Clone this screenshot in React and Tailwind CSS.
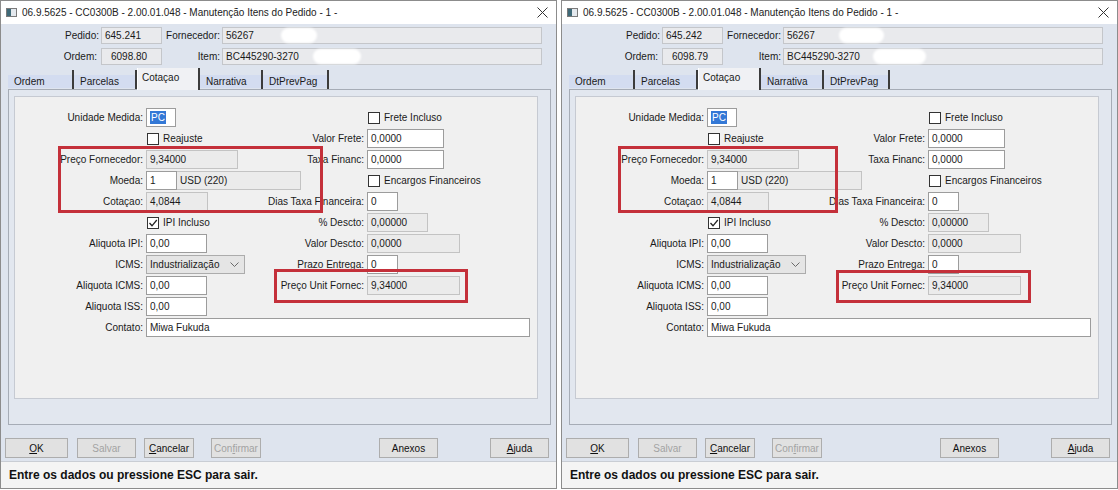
import React from 'react'

const FONT = "font-['Liberation_Sans',Arial,sans-serif]"

function Field({ ro, className = '', children }) {
  return (
    <div
      className={`flex h-[19px] items-center overflow-hidden whitespace-nowrap border pl-[3px] ${
        ro ? 'border-[#c3c3c3] bg-[#ebebeb]' : 'border-[#9c9c9c] bg-white'
      } ${className}`}
    >
      {children}
    </div>
  )
}

function Label({ children }) {
  return <span className="justify-self-end whitespace-nowrap">{children}</span>
}

function Check({ label, checked }) {
  return (
    <div className="flex items-center gap-[4px] pl-[1px]">
      <span className="flex h-[12px] w-[12px] items-center justify-center border border-[#333] bg-white">
        {checked && (
          <svg width="10" height="10" viewBox="0 0 10 10">
            <path d="M1.5 5 L4 7.8 L8.8 2" fill="none" stroke="#222" strokeWidth="1.3" />
          </svg>
        )}
      </span>
      <span>{label}</span>
    </div>
  )
}

function Btn({ children, className = '', disabled }) {
  return (
    <div
      className={`flex h-[20px] items-center justify-center border border-[#adadad] bg-[#e1e1e1] ${
        disabled ? 'text-[#a3a3a3]' : 'text-[#111]'
      } ${className}`}
    >
      {children}
    </div>
  )
}

function Tab({ children, className = '' }) {
  return (
    <div className={`flex h-[19px] flex-col justify-end border-r-2 border-[#3c3c3c] ${className}`}>
      <div className="mb-[1px] h-[13px] bg-[#d3dcf0] pl-[6px] leading-[13px]">{children}</div>
    </div>
  )
}

function Win({ pedido, ordem, blob1, blob2, box1, box2 }) {
  return (
    <div className="relative flex h-[489px] w-[557px] flex-col border border-[#8c8c8c] bg-[#dee4ee] text-[10px] text-[#1a1a1a]">
      {/* title bar */}
      <div className="flex h-[23px] items-center bg-white pl-[5px] pr-[8px]">
        <svg width="11" height="9" viewBox="0 0 11 9" className="mr-[5px]">
          <rect x="0.5" y="0.5" width="10" height="8" fill="#e4e9ee" stroke="#7a7a7a" />
          <rect x="1" y="1" width="4" height="7" fill="#3f6a78" />
        </svg>
        <span className="flex-1 text-[10px] text-[#222]">06.9.5625 - CC0300B - 2.00.01.048 - Manutenção Itens do Pedido - 1 -</span>
        <svg width="11" height="11" viewBox="0 0 11 11">
          <path d="M0.5 0.5 L10.5 10.5 M10.5 0.5 L0.5 10.5" stroke="#333" strokeWidth="1" />
        </svg>
      </div>

      {/* header */}
      <div className="flex flex-col gap-[4px] pt-[3px]">
        <div className="flex h-[17px] items-center">
          <span className="w-[98px] text-right">Pedido:</span>
          <div className="ml-[2px] flex h-full w-[61px] items-center border border-[#c4c6ca] bg-[#e9eaed] pl-[3px]">{pedido}</div>
          <span className="w-[58px] text-right">Fornecedor:</span>
          <div className="relative ml-[2px] flex h-full w-[320px] items-center border border-[#c4c6ca] bg-[#e9eaed] pl-[3px]">
            56267
            <span className={`absolute top-[0px] h-[15px] rounded-full bg-white blur-[1px] ${blob1}`} />
          </div>
        </div>
        <div className="flex h-[17px] items-center">
          <span className="w-[96px] text-right">Ordem:</span>
          <div className="ml-[4px] flex h-full w-[61px] items-center border border-[#c4c6ca] bg-[#e9eaed] pl-[9px]">{ordem}</div>
          <span className="w-[58px] text-right">Item:</span>
          <div className="relative ml-[2px] flex h-full w-[320px] items-center border border-[#c4c6ca] bg-[#e9eaed] pl-[3px]">
            BC445290-3270
            <span className={`absolute top-[0px] h-[15px] rounded-full bg-white blur-[1px] ${blob2}`} />
          </div>
        </div>
      </div>

      {/* tabs */}
      <div className="mt-[3px] flex h-[21px] items-end pl-[7px]">
        <Tab className="w-[66px]">Ordem</Tab>
        <Tab className="w-[63px]">Parcelas</Tab>
        <div className="relative z-10 -mb-[1px] h-[22px] w-[63px] border-r-2 border-l border-[#3c3c3c] border-l-white bg-[#f0f1f4] pl-[4px] pt-[2px]">
          Cotaçao
        </div>
        <Tab className="w-[63px]">Narrativa</Tab>
        <Tab className="w-[66px]">DtPrevPag</Tab>
      </div>

      {/* panel */}
      <div className="ml-[7px] h-[336px] w-[543px] border border-[#a6acb6] bg-[#e2e7ef] pl-[5px] pt-[6px]">
        <div className="h-[303px] w-[524px] border border-[#c6cad2] bg-[#f0f0f0] pt-[11px]">
          <div className="grid auto-rows-[19px] grid-cols-[128px_119px_96px_1fr] items-center gap-x-[3px] gap-y-[2px]">
            <Label>Unidade Medida:</Label>
            <Field className="w-[30px] pl-[2px]">
              <span className="bg-[#3378d6] px-[1px] leading-[13px] text-white">PC</span>
            </Field>
            <span />
            <Check label="Frete Incluso" />

            <span />
            <Check label="Reajuste" />
            <Label>Valor Frete:</Label>
            <Field className="w-[77px]">0,0000</Field>

            <Label>Preço Fornecedor:</Label>
            <Field ro className="w-[92px]">9,34000</Field>
            <Label>Taxa Financ:</Label>
            <Field className="w-[77px]">0,0000</Field>

            <Label>Moeda:</Label>
            <div className="col-span-2 flex">
              <Field className="w-[31px]">1</Field>
              <Field ro className="w-[124px] border-l-0">USD (220)</Field>
            </div>
            <Check label="Encargos Financeiros" />

            <Label>Cotaçao:</Label>
            <Field ro className="w-[62px]">4,0844</Field>
            <Label>Dias Taxa Financeira:</Label>
            <Field className="w-[31px]">0</Field>

            <span />
            <Check label="IPI Incluso" checked />
            <Label>% Descto:</Label>
            <Field ro className="w-[61px]">0,00000</Field>

            <Label>Aliquota IPI:</Label>
            <Field className="w-[61px]">0,00</Field>
            <Label>Valor Descto:</Label>
            <Field ro className="w-[93px]">0,0000</Field>

            <Label>ICMS:</Label>
            <div className="flex h-[19px] w-[99px] items-center justify-between border border-[#acacac] bg-[#e5e5e5] pl-[3px] pr-[5px]">
              <span>Industrialização</span>
              <svg width="9" height="5" viewBox="0 0 9 5">
                <path d="M0.5 0.5 L4.5 4.5 L8.5 0.5" fill="none" stroke="#6a6a6a" strokeWidth="1" />
              </svg>
            </div>
            <Label>Prazo Entrega:</Label>
            <Field className="w-[31px]">0</Field>

            <Label>Aliquota ICMS:</Label>
            <Field className="w-[61px]">0,00</Field>
            <Label>Preço Unit Fornec:</Label>
            <Field ro className="w-[93px]">9,34000</Field>

            <Label>Aliquota ISS:</Label>
            <Field className="w-[61px]">0,00</Field>
            <span />
            <span />

            <Label>Contato:</Label>
            <div className="col-span-3">
              <Field className="w-[384px]">Miwa Fukuda</Field>
            </div>
          </div>
        </div>
      </div>

      {/* buttons */}
      <div className="flex h-[36px] items-start pl-[4px] pr-[7px] pt-[13px]">
        <Btn className="w-[63px]"><span className="underline">O</span>K</Btn>
        <Btn disabled className="ml-[9px] w-[59px]">Salvar</Btn>
        <Btn className="ml-[8px] w-[50px]"><span className="underline">C</span>ancelar</Btn>
        <Btn disabled className="ml-[17px] w-[50px]">Con<span className="underline">f</span>irmar</Btn>
        <div className="flex-1" />
        <Btn className="w-[59px]">Anexos</Btn>
        <Btn className="ml-[52px] w-[59px]"><span className="underline">A</span>juda</Btn>
      </div>

      {/* status */}
      <div className="flex h-[27px] items-center border-t border-[#c9cdd4] bg-[#f4f4f4] pl-[8px] text-[12px] font-bold text-[#111]">
        Entre os dados ou pressione ESC para sair.
      </div>

      <div className={`pointer-events-none absolute border-[3px] border-[#c4303a] ${box1}`} />
      <div className={`pointer-events-none absolute border-[3px] border-[#c4303a] ${box2}`} />
    </div>
  )
}

export default function App() {
  return (
    <div className={`flex h-[490px] w-[1118px] gap-[4px] bg-white ${FONT}`}>
      <Win
        pedido="645.241"
        ordem="6098.80"
        blob1="left-[58px] w-[36px]"
        blob2="left-[90px] w-[48px]"
        box1="left-[57px] top-[145px] h-[67px] w-[265px]"
        box2="left-[273px] top-[268px] h-[34px] w-[194px]"
      />
      <Win
        pedido="645.242"
        ordem="6098.79"
        blob1="left-[55px] w-[45px]"
        blob2="left-[89px] w-[53px]"
        box1="left-[56px] top-[145px] h-[67px] w-[220px]"
        box2="left-[274px] top-[269px] h-[33px] w-[195px]"
      />
    </div>
  )
}
